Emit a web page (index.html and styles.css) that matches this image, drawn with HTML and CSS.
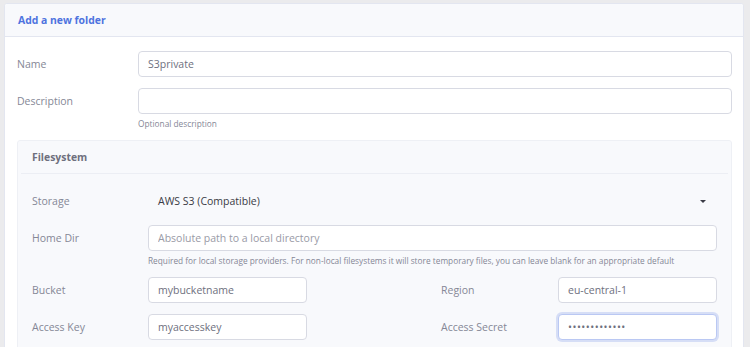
FILE: index.html
```html
<!DOCTYPE html>
<html lang="en">
<head>
    <meta charset="UTF-8">
    <meta name="viewport" content="width=device-width, initial-scale=1.0">
    <title>Add a new folder</title>
    <link rel="stylesheet" href="styles.css">
</head>
<body>
    <div class="card">
        <div class="card-header">
            <h6 class="card-title">Add a new folder</h6>
        </div>
        <div class="card-body">
            <div class="form-row">
                <label class="form-label" for="name">Name</label>
                <input class="form-input" id="name" type="text" value="S3private">
            </div>
            <div class="form-row">
                <label class="form-label" for="description">Description</label>
                <div class="form-field">
                    <input class="form-input" id="description" type="text">
                    <small class="form-help">Optional description</small>
                </div>
            </div>

            <div class="inner-card">
                <div class="inner-header">
                    <span class="inner-title">Filesystem</span>
                </div>
                <div class="inner-body">
                    <div class="fs-row">
                        <label class="form-label" for="storage">Storage</label>
                        <div class="select-wrap">
                            <span class="select-value">AWS S3 (Compatible)</span>
                            <span class="select-caret"></span>
                        </div>
                    </div>
                    <div class="fs-row">
                        <label class="form-label" for="homedir">Home Dir</label>
                        <div class="form-field">
                            <input class="form-input" id="homedir" type="text" placeholder="Absolute path to a local directory">
                            <small class="form-help">Required for local storage providers. For non-local filesystems it will store temporary files, you can leave blank for an appropriate default</small>
                        </div>
                    </div>
                    <div class="fs-grid">
                        <label class="form-label" for="bucket">Bucket</label>
                        <input class="form-input" id="bucket" type="text" value="mybucketname">
                        <span></span>
                        <label class="form-label" for="region">Region</label>
                        <input class="form-input" id="region" type="text" value="eu-central-1">

                        <label class="form-label" for="accesskey">Access Key</label>
                        <input class="form-input" id="accesskey" type="text" value="myaccesskey">
                        <span></span>
                        <label class="form-label" for="secret">Access Secret</label>
                        <input class="form-input focused" id="secret" type="password" value="mysecretvalue">
                    </div>
                </div>
            </div>
        </div>
    </div>
</body>
</html>
```

FILE: styles.css
```css
body {
    margin: 0;
    padding: 3px 6px 0 4px;
    background-color: #ebebed;
    font-family: "Open Sans", "Noto Sans", sans-serif;
    font-size: 10.5px;
    color: #858796;
}
.card {
    background-color: #fff;
    border: 1px solid #e3e6f0;
    border-radius: 3px;
    overflow: hidden;
}
.card-header {
    height: 32px;
    display: flex;
    align-items: center;
    padding: 0 13px;
    background-color: #f8f9fc;
    border-bottom: 1px solid #e3e6f0;
}
.card-title {
    margin: 0;
    font-size: 10.4px;
    font-weight: 700;
    color: #4e73df;
}
.card-body {
    padding: 14px 11px 0 12px;
}
.form-row {
    display: flex;
    align-items: flex-start;
    margin-bottom: 11px;
}
.form-row .form-label {
    width: 121px;
    flex-shrink: 0;
    line-height: 26px;
}
.form-field {
    flex: 1;
    display: flex;
    flex-direction: column;
}
.form-input {
    box-sizing: border-box;
    width: 100%;
    height: 26px;
    padding: 0 9px;
    border: 1px solid #d8dae3;
    border-radius: 4px;
    background-color: #fff;
    font-family: inherit;
    font-size: 10.5px;
    color: #6e707e;
    outline: none;
}
.form-input::placeholder {
    color: #999aa6;
}
.form-input.focused {
    border-color: #bac8f3;
    box-shadow: 0 0 0 2px rgba(78, 115, 223, 0.2);
    letter-spacing: 0.5px;
}
.form-help {
    margin-top: 4px;
    font-size: 8.3px;
    color: #858796;
}
.inner-card {
    margin-top: 11px;
    border: 1px solid #eef0f5;
    border-radius: 3px;
    background-color: #f8f9fc;
}
.inner-header {
    height: 32px;
    display: flex;
    align-items: center;
    margin: 0 3px;
    border-bottom: 1px solid #eceef4;
}
.inner-title {
    margin-left: 11px;
    font-size: 10.4px;
    font-weight: 700;
    color: #6e707e;
}
.inner-body {
    padding: 14px 14px 10px 14px;
}
.fs-row {
    display: flex;
    align-items: flex-start;
    margin-bottom: 11px;
}
.fs-row .form-label {
    width: 116px;
    flex-shrink: 0;
    line-height: 26px;
}
.select-wrap {
    flex: 1;
    height: 26px;
    display: flex;
    align-items: center;
    justify-content: space-between;
    padding: 0 11px 0 10px;
}
.select-value {
    color: #3a3b45;
}
.select-caret {
    width: 0;
    height: 0;
    border-left: 3px solid transparent;
    border-right: 3px solid transparent;
    border-top: 3px solid #3a3b45;
}
.fs-grid {
    display: grid;
    grid-template-columns: 116px 159px 134px 117px 159px;
    row-gap: 11px;
    align-items: center;
}
```
